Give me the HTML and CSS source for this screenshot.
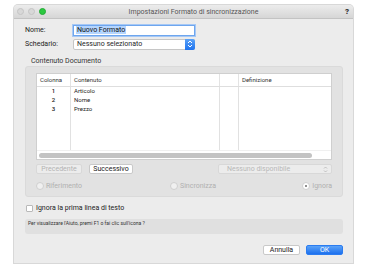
FILE: index.html
```html
<!DOCTYPE html>
<html>
<head>
<meta charset="utf-8">
<link rel="stylesheet" href="styles.css">
</head>
<body>
<div class="window">
  <div class="titlebar">
    <div class="lights">
      <span class="light grey"></span>
      <span class="light grey"></span>
      <span class="light green"></span>
    </div>
    <div class="title">Impostazioni Formato di sincronizzazione</div>
    <div class="help">?</div>
  </div>

  <div class="content">
    <div class="row first">
      <span class="label">Nome:</span>
      <div class="input"><span class="sel">Nuovo Formato</span></div>
    </div>
    <div class="row second">
      <span class="label">Schedario:</span>
      <div class="select">
        <span class="seltext">Nessuno selezionato</span>
        <span class="arrowbox">
          <svg width="6" height="8" viewBox="0 0 6 8"><path d="M1 3 L3 1 L5 3 M1 5 L3 7 L5 5" fill="none" stroke="#fff" stroke-width="1"/></svg>
        </span>
      </div>
    </div>

    <div class="grouplabel">Contenuto Documento</div>
    <div class="group">
      <div class="table">
        <div class="thead">
          <div class="th c1">Colonna</div>
          <div class="th c2">Contenuto</div>
          <div class="th c3"></div>
          <div class="th c4">Definizione</div>
        </div>
        <div class="tbody">
          <div class="col c1">
            <div class="cell num">1</div>
            <div class="cell num">2</div>
            <div class="cell num">3</div>
          </div>
          <div class="col c2">
            <div class="cell">Articolo</div>
            <div class="cell">Nome</div>
            <div class="cell">Prezzo</div>
          </div>
          <div class="col c3"></div>
          <div class="col c4"></div>
        </div>
        <div class="scrollarea"><div class="scrollbar"></div></div>
      </div>

      <div class="navrow">
        <div class="btn disabled w46">Precedente</div>
        <div class="btn w44">Successivo</div>
        <div class="select disabled-select">
          <span class="seltext">Nessuno disponibile</span>
          <svg class="updown" width="5" height="7" viewBox="0 0 5 7"><path d="M1 2.5 L2.5 1 L4 2.5 M1 4.5 L2.5 6 L4 4.5" fill="none" stroke="#b5b5b5" stroke-width="0.8"/></svg>
        </div>
      </div>

      <div class="radiorow">
        <div class="radio"><span class="circle"></span>Riferimento</div>
        <div class="radio"><span class="circle"></span>Sincronizza</div>
        <div class="radio"><span class="circle on"></span>Ignora</div>
      </div>
    </div>

    <div class="checkrow">
      <span class="checkbox"></span>Ignora la prima linea di testo
    </div>

    <div class="helpbox">Per visualizzare l'Aiuto, premi F1 o fai clic sull'icona ?</div>

    <div class="buttons">
      <div class="btn annulla">Annulla</div>
      <div class="btn ok">OK</div>
    </div>
  </div>
</div>
</body>
</html>
```
FILE: styles.css
```css
* { box-sizing: border-box; }
html, body { margin: 0; padding: 0; background: #ffffff; }
body {
  font-family: Roboto, "Liberation Sans", sans-serif;
  font-size: 7px;
  color: #262626;
  width: 366px;
  height: 270px;
  overflow: hidden;
}
.window {
  margin: 5px 0 0 14px;
  width: 339px;
  height: 258px;
  background: #ececec;
  border-radius: 4px 4px 0 0;
  box-shadow: 0 0 0 1px #d8d8d8;
  overflow: hidden;
}
.titlebar {
  height: 14px;
  background: linear-gradient(#ececec, #d6d6d6);
  border-bottom: 1px solid #c3c3c3;
  display: flex;
  align-items: center;
  padding: 0 3px 0 3px;
}
.lights { display: flex; gap: 4px; width: 60px; }
.light { width: 7px; height: 7px; border-radius: 50%; display: block; flex: none; }
.light.grey { background: #d8d8d8; border: 1px solid #c4c4c4; }
.light.green { background: #2bc940; border: 1px solid #25ab36; }
.title { flex: 1; text-align: center; color: #555; font-size: 7px; padding-right: 34px; }
.help { font-weight: 900; font-size: 8px; color: #333; width: 6px; text-align: center; }

.content { padding: 0 10px 0 11px; }
.row { display: flex; align-items: center; height: 12px; }
.row.first { margin-top: 5px; }
.row.second { margin-top: 2px; }
.label { width: 48px; color: #222; }
.input {
  width: 122px; height: 11px;
  background: #fff;
  border: 1px solid #6ea6ee;
  box-shadow: 0 0 0 1px #a6c8f5;
  display: flex; align-items: center;
  padding-left: 2px;
}
.sel { background: #b4d5fe; padding: 0 1px; line-height: 8px; color: #111; }
.select {
  width: 122px; height: 11px;
  background: #fff;
  border: 1px solid #c6c6c6;
  border-radius: 2px;
  display: flex; align-items: center;
  justify-content: space-between;
  padding-left: 3px;
}
.arrowbox {
  width: 10px; height: 11px; margin-right: -1px;
  background: linear-gradient(#5aa2f8, #1f73ee);
  border-radius: 0 2px 2px 0;
  display: flex; align-items: center; justify-content: center;
}
.grouplabel { margin-top: 7px; padding-left: 6px; height: 8px; line-height: 8px; color: #333; }
.group {
  margin-top: 1px;
  height: 131px;
  background: #e2e2e2;
  border: 1px solid #dadada;
  border-radius: 3px;
  padding: 6px 10px 0 10px;
}
.table {
  background: #fff;
  border: 1px solid #cfcfcf;
  height: 87px;
  display: flex; flex-direction: column;
}
.thead, .tbody { display: grid; grid-template-columns: 34px 149px 19px 1fr; }
.thead { height: 13px; border-bottom: 1px solid #dedede; }
.th { font-size: 6px; color: #333; line-height: 11px; padding-left: 3px; border-right: 1px solid #e3e3e3; }
.th.c4 { border-right: none; }
.tbody { flex: 1; }
.col { border-right: 1px solid #e1e1e1; padding-top: 0; }
.col.c4 { border-right: none; }
.cell { font-size: 6px; height: 9px; line-height: 8px; padding-left: 3px; color: #222; }
.cell.num { text-align: center; padding-left: 0; font-weight: 500; }
.scrollarea { height: 9px; padding: 2px 19px 0 2px; border-top: 1px solid #f0f0f0; }
.scrollbar { height: 5px; background: #c3c3c3; border-radius: 3px; }

.navrow { display: flex; align-items: center; margin-top: 4px; height: 10px; }
.btn {
  height: 10px; line-height: 8px; text-align: center;
  background: #fff; border: 1px solid #c9c9c9; border-radius: 2px;
  color: #222;
}
.btn.disabled { background: #ececec; color: #b3b3b3; border-color: #d8d8d8; }
.w46 { width: 46px; }
.w44 { width: 44px; margin-left: 7px; }
.disabled-select {
  margin-left: auto;
  width: 114px; height: 10px;
  background: #ececec; border-color: #d8d8d8;
  color: #b8b8b8;
  padding: 0 3px 0 8px;
}
.radiorow {
  display: grid; grid-template-columns: 134px 1fr auto;
  margin-top: 8px; height: 8px; align-items: center;
  color: #b0b0b0;
}
.radio { display: flex; align-items: center; gap: 2px; }
.circle {
  width: 8px; height: 8px; border-radius: 50%; flex: none;
  background: #f0f0f0; border: 1px solid #cfcfcf;
  display: block;
}
.circle.on { position: relative; background: #fff; }
.circle.on::after {
  content: ""; position: absolute; left: 2px; top: 2px;
  width: 2px; height: 2px; border-radius: 50%; background: #6a6a6a;
}
.checkrow { display: flex; align-items: center; gap: 3px; margin-top: 7px; height: 8px; padding-left: 1px; color: #222; }
.checkbox { width: 7px; height: 7px; flex: none; background: #fff; border: 1px solid #b9b9b9; border-radius: 1px; display: block; }
.helpbox {
  margin-top: 7px; height: 15px;
  background: #e0e0e0; border-radius: 3px;
  font-size: 5px; line-height: 9px; padding-left: 3px; color: #333;
}
.buttons { display: flex; justify-content: flex-end; gap: 6px; margin-top: 11px; }
.annulla { width: 37px; }
.ok {
  width: 37px; color: #fff; border: 1px solid #2b7cf0;
  background: linear-gradient(#5aa2f8, #1c70ee);
}
```
